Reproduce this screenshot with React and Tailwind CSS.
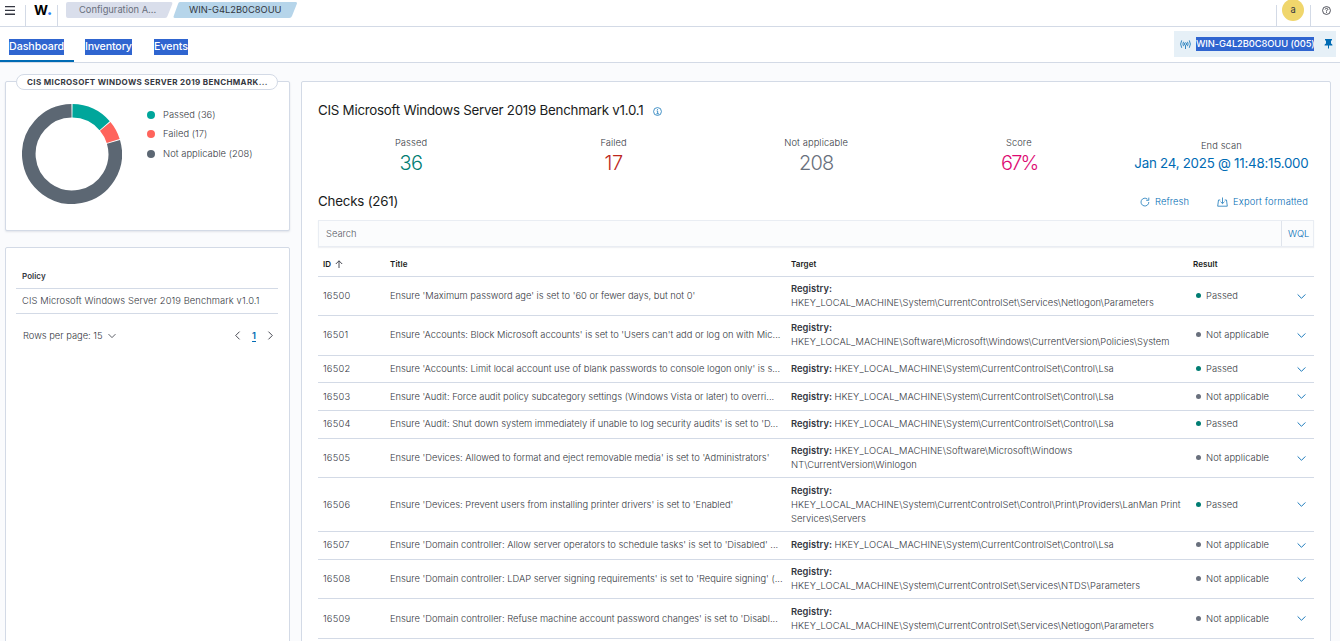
import React from "react";

const rows = [
  { id: "16500", title: "Ensure 'Maximum password age' is set to '60 or fewer days, but not 0'", lines: ["", "HKEY_LOCAL_MACHINE\\System\\CurrentControlSet\\Services\\Netlogon\\Parameters"], passed: true, h: "h-[39px]" },
  { id: "16501", title: "Ensure 'Accounts: Block Microsoft accounts' is set to 'Users can't add or log on with Mic...", lines: ["", "HKEY_LOCAL_MACHINE\\Software\\Microsoft\\Windows\\CurrentVersion\\Policies\\System"], passed: false, h: "h-[40px] pb-px" },
  { id: "16502", title: "Ensure 'Accounts: Limit local account use of blank passwords to console logon only' is s...", lines: ["HKEY_LOCAL_MACHINE\\System\\CurrentControlSet\\Control\\Lsa"], passed: true, h: "h-[27px]" },
  { id: "16503", title: "Ensure 'Audit: Force audit policy subcategory settings (Windows Vista or later) to overri...", lines: ["HKEY_LOCAL_MACHINE\\System\\CurrentControlSet\\Control\\Lsa"], passed: false, h: "h-[28px]" },
  { id: "16504", title: "Ensure 'Audit: Shut down system immediately if unable to log security audits' is set to 'D...", lines: ["HKEY_LOCAL_MACHINE\\System\\CurrentControlSet\\Control\\Lsa"], passed: true, h: "h-[28px] pb-px" },
  { id: "16505", title: "Ensure 'Devices: Allowed to format and eject removable media' is set to 'Administrators'", lines: ["HKEY_LOCAL_MACHINE\\Software\\Microsoft\\Windows", "NT\\CurrentVersion\\Winlogon"], passed: false, h: "h-[39px]" },
  { id: "16506", title: "Ensure 'Devices: Prevent users from installing printer drivers' is set to 'Enabled'", lines: ["", "HKEY_LOCAL_MACHINE\\System\\CurrentControlSet\\Control\\Print\\Providers\\LanMan Print", "Services\\Servers"], passed: true, h: "h-[54px]" },
  { id: "16507", title: "Ensure 'Domain controller: Allow server operators to schedule tasks' is set to 'Disabled' ...", lines: ["HKEY_LOCAL_MACHINE\\System\\CurrentControlSet\\Control\\Lsa"], passed: false, h: "h-[28px] pb-px" },
  { id: "16508", title: "Ensure 'Domain controller: LDAP server signing requirements' is set to 'Require signing' (...", lines: ["", "HKEY_LOCAL_MACHINE\\System\\CurrentControlSet\\Services\\NTDS\\Parameters"], passed: false, h: "h-[39px]" },
  { id: "16509", title: "Ensure 'Domain controller: Refuse machine account password changes' is set to 'Disabl...", lines: ["", "HKEY_LOCAL_MACHINE\\System\\CurrentControlSet\\Services\\Netlogon\\Parameters"], passed: false, h: "h-[40px]" },
];

const stats = [
  { label: "Passed", value: "36", color: "text-[#017d73] tracking-[-0.5px]" },
  { label: "Failed", value: "17", color: "text-[#bd271e] tracking-[-0.5px]" },
  { label: "Not applicable", value: "208", color: "text-[#69707d] tracking-[-0.8px]" },
  { label: "Score", value: "67%", color: "text-[#dd0a73] tracking-[-1.8px] pl-px" },
];

const legend = [
  { label: "Passed (36)", color: "bg-[#00a69b]" },
  { label: "Failed (17)", color: "bg-[#ff645c]" },
  { label: "Not applicable (208)", color: "bg-[#5c6773]" },
];

function Chevron({ className, d = "M1 3 L5 7 L9 3" }) {
  return (
    <svg viewBox="0 0 10 10" className={className} fill="none" stroke="currentColor" strokeWidth="1" strokeLinecap="round" strokeLinejoin="round">
      <path d={d} />
    </svg>
  );
}

function arc(a0, a1) {
  const p = (a) => `${50 + 43.2 * Math.sin(a)} ${50 - 43.2 * Math.cos(a)}`;
  return `M${p(a0)} A43.2 43.2 0 ${a1 - a0 > Math.PI ? 1 : 0} 1 ${p(a1)}`;
}

function Donut() {
  const t = (Math.PI * 2) / 261;
  const g = 0.011;
  return (
    <svg viewBox="0 0 100 100" className="size-[100px] shrink-0" fill="none" strokeWidth="13.6">
      <path d={arc(g, 36 * t - g)} stroke="#00a69b" />
      <path d={arc(36 * t + g, 53 * t - g)} stroke="#ff645c" />
      <path d={arc(53 * t + g, 261 * t - g)} stroke="#5c6773" />
    </svg>
  );
}

function TopBar() {
  return (
    <header className="flex h-[27px] shrink-0 border-b border-[#d3dae6] bg-white">
      <div className="flex w-[25px] pl-[5px] pt-[6px]">
        <svg viewBox="0 0 10 9" className="h-[9px] w-[10px]" fill="#343741">
          <path d="M0 0h10v1.3H0zM0 3.8h10v1.3H0zM0 7.6h10v1.3H0z" />
        </svg>
      </div>
      <div className="mt-[5px] flex w-[33px] border-x border-[#d3dae6] pl-[8px]">
        <span className="mt-[-4px] flex text-[13.5px] font-bold leading-[18px] tracking-[-1.2px] text-black">
          W<span className="text-[17px] leading-[16px] text-[#2d7ff9]">.</span>
        </span>
      </div>
      <nav className="relative ml-[8px] mt-[2px] flex h-[16px] text-[9.33px] leading-[16px]">
        <svg viewBox="0 0 232 16" className="absolute left-0 top-0 h-[16px] w-[232px]">
          <path d="M2 0H105Q107 0 106.300 2L101.500 14Q101 16 99 16H2Q0 16 0 14V2Q0 0 2 0Z" fill="#d9deeb" />
          <path d="M114 0H229.500Q231.500 0 230.800 2L226 14Q225.300 16 223.300 16H109Q107 16 107.700 14L112 2Q112.500 0 114 0Z" fill="#b6d5ea" />
        </svg>
        <span className="relative w-[123px] pl-[13px] text-[#69707d]">Configuration A...</span>
        <span className="relative text-[#343741]">WIN-G4L2B0C8OUU</span>
      </nav>
      <div className="ml-auto mt-[5px] flex w-[35px] border-x border-[#d3dae6]">
        <span className="ml-[5px] mt-[-6px] flex size-[22px] items-center justify-center rounded-full bg-[#f0d66c] text-[9.33px] text-[#343741]">a</span>
      </div>
      <div className="w-[29px] pl-[11px] pt-[6px]">
        <svg viewBox="0 0 16 16" className="size-[9px]" fill="none" stroke="#343741" strokeWidth="1.500">
          <circle cx="8" cy="8" r="7" />
          <path d="M5.600 6.200Q5.800 4.200 8 4.200Q10.400 4.300 10.400 6.200Q10.200 7.400 8 8.200V9.800M8 10.900V12.400" />
        </svg>
      </div>
    </header>
  );
}

function Tabs() {
  return (
    <div className="flex h-[36px] shrink-0 border-b border-[#d3dae6] bg-white text-[10.67px] font-medium leading-[16px] tracking-[-0.05px] text-white">
      <div className="flex w-[74px] border-b-2 border-[#006bb4] pl-[9px] pt-[12px]">
        <span className="h-[16px] w-[55px] whitespace-nowrap bg-[#2f65d0]">Dashboard</span>
      </div>
      <div className="flex w-[80px] pl-[11px] pt-[12px]">
        <span className="h-[16px] w-[47px] whitespace-nowrap bg-[#2f65d0] tracking-[-0.15px]">Inventory</span>
      </div>
      <div className="flex pt-[12px]">
        <span className="h-[16px] w-[34px] whitespace-nowrap bg-[#2f65d0]">Events</span>
      </div>
      <div className="ml-auto mr-[4px] mt-[4px] flex h-[26px] w-[162px] items-center bg-[#e6f0f7] pl-[6px]">
        <svg viewBox="0 0 11 9" className="h-[9px] w-[11px]" fill="none" stroke="#3287c1" strokeWidth="1">
          <circle cx="5.500" cy="4" r="1.200" />
          <path d="M5.500 5.200V9M3.500 6.200Q2.300 4 3.500 1.800M7.500 6.200Q8.700 4 7.500 1.800M1.700 7.800Q-.4 4 1.700.4M9.300 7.800Q11.400 4 9.300.4" />
        </svg>
        <span className="ml-[5px] h-[14px] w-[118px] whitespace-nowrap bg-[#2f65d0] text-[9.33px] leading-[14px] tracking-[-0.08px]">WIN-G4L2B0C8OUU (005)</span>
        <svg viewBox="0 0 9 10" className="ml-[10px] h-[10px] w-[9px]" fill="#006bb4">
          <path d="M1 0H8V1.400H7V4.500Q8.500 5.200 8.500 6.600H5V9.500H4V6.600H.5Q.5 5.200 2 4.500V1.400H1Z" />
        </svg>
      </div>
    </div>
  );
}

export default function App() {
  return (
    <div className="flex h-[641px] w-[1340px] flex-col overflow-hidden bg-[#fafbfd] font-['Inter',sans-serif] text-[9.33px] text-[#343741]">
      <TopBar />
      <Tabs />
      <main className="flex flex-1 gap-[11px] pl-[5px] pt-[18px] font-light">
        <aside className="flex w-[285px] flex-col gap-[16px]">
          <section className="relative flex h-[150px] rounded-[2px] border border-[#d3dae6] bg-white pl-[16px] pt-[22px] shadow-[0_1px_2px_rgba(152,162,179,0.25)]">
            <h2 className="absolute left-[10px] top-[-8px] h-[16px] w-[262px] whitespace-nowrap rounded-full border border-[#d3dae6] bg-white pl-[10px] text-[8px] font-bold leading-[14px] tracking-[0.36px]">
              CIS MICROSOFT WINDOWS SERVER 2019 BENCHMARK...
            </h2>
            <Donut />
            <ul className="ml-[25px] mt-[1px]">
              {legend.map((l) => (
                <li key={l.label} className="flex h-[19.500px] items-center gap-[8px] tracking-[0.05px]">
                  <span className={`size-[8px] rounded-full ${l.color}`} />
                  {l.label}
                </li>
              ))}
            </ul>
          </section>
          <section className="h-[420px] shrink-0 rounded-[2px] border border-[#d3dae6] bg-white pl-[10px] pr-[11px] pt-[19px]">
            <div className="h-[22px] border-b border-[#d3dae6] pl-[6px] text-[8px] font-semibold leading-[19px] tracking-[0.05px]">Policy</div>
            <div className="h-[25px] border-b border-[#d3dae6] pl-[6px] leading-[24px] tracking-[0.1px]">CIS Microsoft Windows Server 2019 Benchmark v1.0.1</div>
            <div className="mt-[14px] flex h-[16px] items-center pl-[7px]">
              Rows per page: 15
              <Chevron className="ml-[5px] size-[8px] text-[#343741]" />
              <Chevron d="M7 1 L3 5 L7 9" className="mb-px ml-auto size-[9px]" />
              <span className="mx-[10px] font-semibold text-[#006bb4] underline underline-offset-2">1</span>
              <Chevron d="M3 1 L7 5 L3 9" className="mb-px mr-[3px] size-[9px]" />
            </div>
          </section>
        </aside>

        <section className="h-[580px] w-[1030px] shrink-0 rounded-[2px] border border-[#d3dae6] bg-white pl-[16px] pr-[16px] pt-[18px]">
          <div className="flex h-[22px] items-center text-[13.33px] font-normal text-[#1a1c21]">
            <h1 className="whitespace-nowrap tracking-[-0.25px]">CIS Microsoft Windows Server 2019 Benchmark v1.0.1</h1>
            <svg viewBox="0 0 16 16" className="ml-[10px] mt-[1px] size-[9px]" fill="none" stroke="#3287c1" strokeWidth="1.600">
              <circle cx="8" cy="8" r="7" />
              <path d="M6.500 7H8.300V12M6 12H10.500M8 3.800V5.400" />
            </svg>
          </div>
          <div className="mt-[13px] flex h-[48px]">
            {stats.map((s) => (
              <div key={s.label} className="flex w-[186px] mr-[16.600px] shrink-0 flex-col items-center">
                <span className="h-[16px] leading-[16px] tracking-[0.1px]">{s.label}</span>
                <span className={`text-[20px] leading-[24px] ${s.color}`}>{s.value}</span>
              </div>
            ))}
            <div className="flex w-[186px] shrink-0 flex-col items-center pt-[3px]">
              <span className="h-[15px] leading-[16px] tracking-[0.1px]">End scan</span>
              <span className="text-[13.33px] font-normal leading-[20px] tracking-[-0.25px] whitespace-nowrap text-[#006bb4]">Jan 24, 2025 @ 11:48:15.000</span>
            </div>
          </div>
          <div className="mt-[8px] flex h-[22px] items-center pr-[6px] text-[#006bb4]">
            <h2 className="text-[13.33px] font-normal tracking-[-0.2px] text-[#1a1c21]">Checks (261)</h2>
            <svg viewBox="0 0 10 10" className="ml-auto size-[10px]" fill="none" stroke="#3287c1" strokeWidth="0.9">
              <path d="M8.800 5A3.900 3.900 0 1 1 7.400 2.100M8.800 .6V3.300H6.200" />
            </svg>
            <span className="ml-[5px] tracking-[0.1px]">Refresh</span>
            <svg viewBox="0 0 11 10" className="ml-[28px] h-[10px] w-[11px]" fill="none" stroke="#3287c1" strokeWidth="0.9">
              <path d="M3.300 3H1.500L.7 9.200H10.300L9.500 3H7.700M5.500 .5V6.500M3.500 4.700L5.500 6.600L7.500 4.700" />
            </svg>
            <span className="ml-[5px] tracking-[0.18px]">Export formatted</span>
          </div>
          <div className="mt-[7px] flex h-[27px] w-[996px] border border-[#e9edf3] bg-[#fbfcfd] leading-[25px] shadow-[0_1px_1px_rgba(152,162,179,0.15)]">
            <span className="flex-1 pl-[7px] text-[#545964]">Search</span>
            <span className="w-[32px] border-l border-[#dfe4ec] pl-[6px] text-[#006bb4]">WQL</span>
          </div>
          <div className="w-[996px]">
            <div className="flex h-[30px] border-b border-[#d3dae6] text-[8px] font-semibold leading-[34px] tracking-[0.1px] text-[#1a1c21]">
              <div className="flex w-[72px] pl-[5px]">
                ID
                <svg viewBox="0 0 8 8" className="ml-[4px] mt-[13px] size-[8px]" fill="none" stroke="#343741" strokeWidth="0.9">
                  <path d="M4 8V.8M.8 4L4 .8L7.200 4" />
                </svg>
              </div>
              <div className="w-[401px]">Title</div>
              <div className="w-[402px]">Target</div>
              <div>Result</div>
            </div>
            {rows.map((r) => (
              <div key={r.id} className={`flex items-center border-b border-[#d3dae6] ${r.h}`}>
                <div className="w-[72px] pl-[5px] tracking-[0.2px]">{r.id}</div>
                <div className="w-[401px] whitespace-nowrap">{r.title}</div>
                <div className="w-[405px] whitespace-nowrap leading-[14px] tracking-[0.06px]">
                  {r.lines.map((line, i) => (
                    <div key={i}>
                      {i === 0 && <b className="font-semibold">Registry: </b>}
                      {line}
                    </div>
                  ))}
                </div>
                <div className="flex items-center gap-[5px] tracking-[0.05px]">
                  <span className={`size-[5px] rounded-full ${r.passed ? "bg-[#017d73]" : "bg-[#69707d]"}`} />
                  {r.passed ? "Passed" : "Not applicable"}
                </div>
                <Chevron className="ml-auto mr-[8px] size-[9px] text-[#006bb4]" />
              </div>
            ))}
          </div>
        </section>
      </main>
    </div>
  );
}
